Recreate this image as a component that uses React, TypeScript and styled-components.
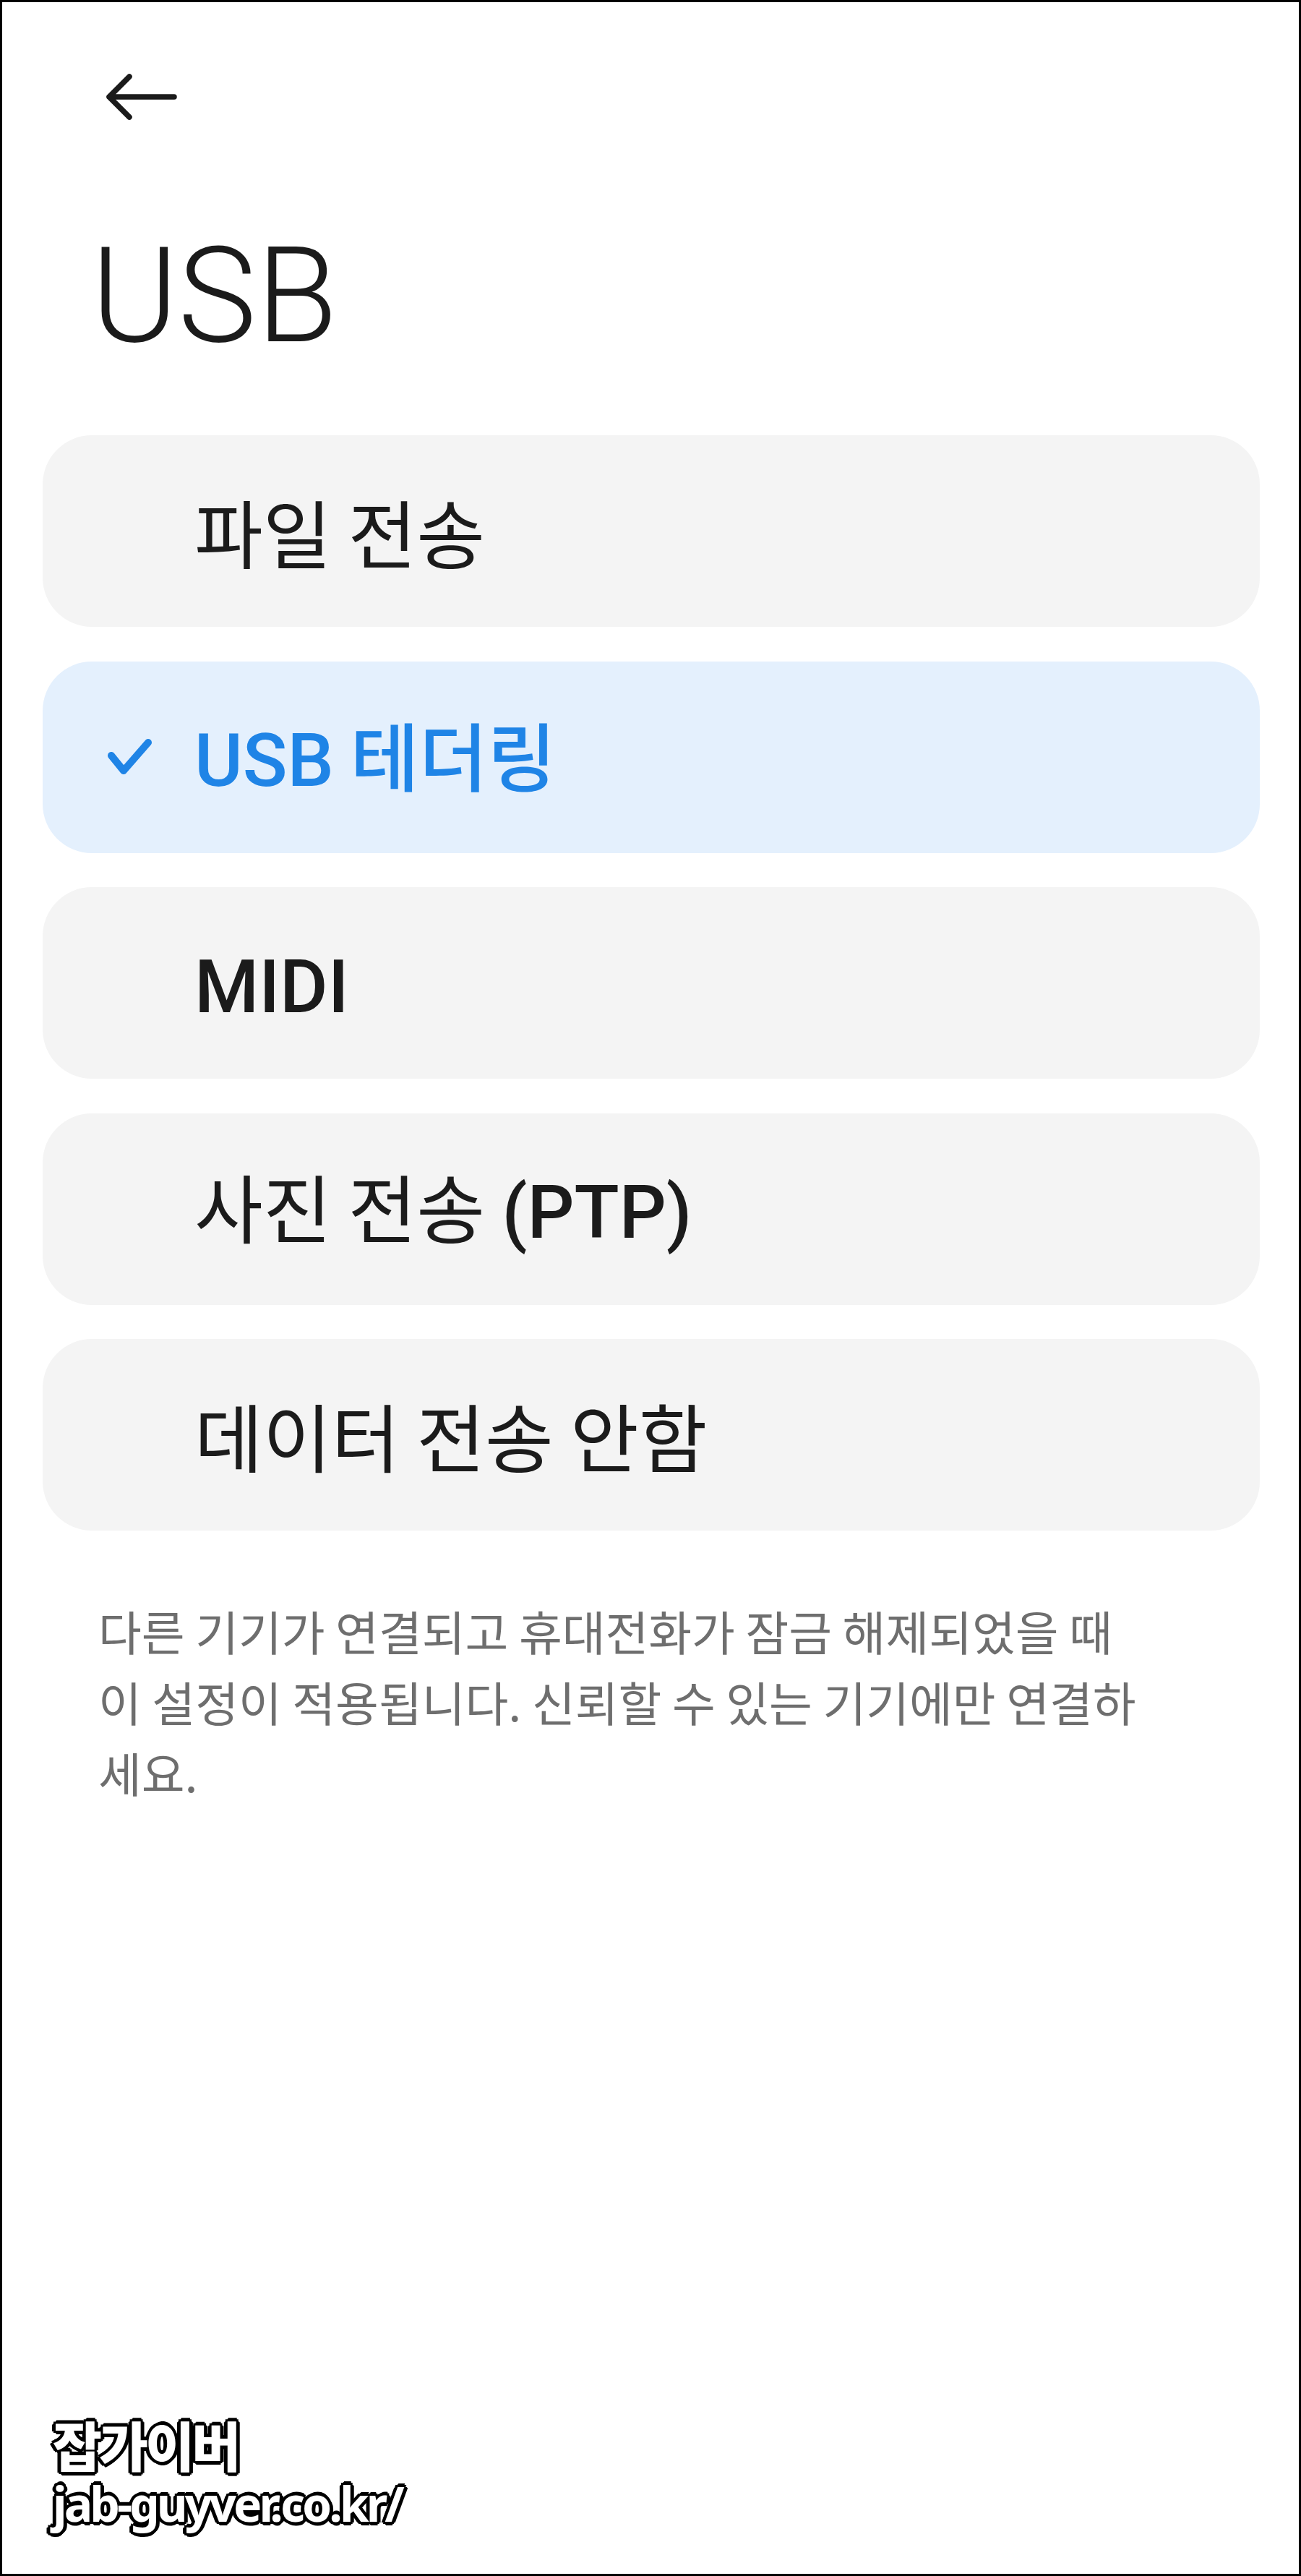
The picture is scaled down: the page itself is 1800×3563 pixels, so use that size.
import React from 'react';
import styled, { createGlobalStyle } from 'styled-components';

const GlobalStyle = createGlobalStyle`
    html, body {
        margin: 0;
        padding: 0;
        background: #ffffff;
    }
    * {
        box-sizing: border-box;
    }
`;

const Screen = styled.div`
    position: relative;
    width: 1800px;
    height: 3563px;
    border: 3px solid #000000;
    background: #ffffff;
    font-family: "Noto Sans CJK KR", "Noto Sans", sans-serif;
    color: #1b1b1b;
    overflow: hidden;
`;

const TopBar = styled.div`
    height: 262px;
    display: flex;
    align-items: center;
    padding-left: 143px;
`;

const BackButton = styled.button`
    border: 0;
    background: none;
    padding: 0;
    display: flex;
    cursor: pointer;
`;

const Title = styled.h1`
    margin: 53px 0 0;
    padding-left: 123px;
    font-family: Roboto, "Noto Sans", sans-serif;
    font-weight: 300;
    font-size: 183px;
    line-height: 183px;
    color: #1b1b1b;
`;

const ModeList = styled.ul`
    list-style: none;
    margin: 101px 54px 0 56px;
    padding: 0;
    display: flex;
    flex-direction: column;
    gap: 47.5px;
`;

const ModeItem = styled.li<{ $selected?: boolean }>`
    height: 265px;
    border-radius: 68px;
    background: ${p => (p.$selected ? '#e4f0fd' : '#f4f4f4')};
    color: ${p => (p.$selected ? '#1f84e6' : '#1b1b1b')};
    display: flex;
    align-items: center;
    padding-left: 87px;
    cursor: pointer;
`;

const CheckSlot = styled.div`
    width: 66px;
    height: 52px;
    margin-right: 57px;
    display: flex;
`;

const Label = styled.span<{ $selected?: boolean }>`
    font-size: 103px;
    font-weight: ${p => (p.$selected ? 500 : 400)};
    line-height: 1;
    white-space: nowrap;
`;

const Latin = styled.span`
    font-family: Roboto, "Noto Sans", sans-serif;
    font-size: 102px;
    font-weight: 500;
`;

const Notice = styled.p`
    margin: 89px 0 0;
    padding-left: 133px;
    font-size: 65px;
    line-height: 98px;
    color: #6e6e6e;
`;

const Watermark = styled.div`
    position: absolute;
    left: 70px;
    bottom: 60px;
    display: flex;
    flex-direction: column;
    gap: 4px;
    color: #ffffff;
    font-weight: 700;
    text-shadow:
        4px 0 0 #000, -4px 0 0 #000, 0 4px 0 #000, 0 -4px 0 #000,
        3px 3px 0 #000, -3px 3px 0 #000, 3px -3px 0 #000, -3px -3px 0 #000,
        5px 1px 0 #000, -5px 1px 0 #000, 1px 5px 0 #000, 1px -5px 0 #000;
`;

const MarkName = styled.span`
    font-size: 74px;
    line-height: 80px;
    font-weight: 900;
    letter-spacing: -4px;
`;

const MarkUrl = styled.span`
    font-family: "Noto Sans", sans-serif;
    font-size: 66px;
    line-height: 76px;
    letter-spacing: -4px;
`;

const modes = [
    { key: 'mtp', ko: '파일 전송' },
    { key: 'tether', latin: 'USB', ko: ' 테더링', selected: true },
    { key: 'midi', latin: 'MIDI' },
    { key: 'ptp', ko: '사진 전송 ', latinAfter: '(PTP)' },
    { key: 'none', ko: '데이터 전송 안함' },
];

function BackArrow() {
    return (
        <svg width="100" height="70" viewBox="0 0 100 70" fill="none">
            <path d="M95 35H5M33 7L5 35L33 63" stroke="#1b1b1b" strokeWidth="7.5" strokeLinecap="round" strokeLinejoin="round" />
        </svg>
    );
}

function CheckMark() {
    return (
        <svg width="66" height="52" viewBox="0 0 66 52" fill="none">
            <path d="M8 24L25 45L59 6" stroke="#1f84e6" strokeWidth="10" strokeLinecap="round" strokeLinejoin="round" />
        </svg>
    );
}

function App() {
    return (
        <>
            <GlobalStyle />
            <Screen>
                <TopBar>
                    <BackButton type="button" aria-label="back">
                        <BackArrow />
                    </BackButton>
                </TopBar>
                <Title>USB</Title>
                <ModeList>
                    {modes.map(m => (
                        <ModeItem key={m.key} $selected={m.selected}>
                            <CheckSlot>{m.selected ? <CheckMark /> : null}</CheckSlot>
                            <Label $selected={m.selected}>
                                {m.latin ? <Latin>{m.latin}</Latin> : null}
                                {m.ko}
                                {m.latinAfter ? <Latin>{m.latinAfter}</Latin> : null}
                            </Label>
                        </ModeItem>
                    ))}
                </ModeList>
                <Notice>
                    다른 기기가 연결되고 휴대전화가 잠금 해제되었을 때<br />
                    이 설정이 적용됩니다. 신뢰할 수 있는 기기에만 연결하<br />
                    세요.
                </Notice>
                <Watermark>
                    <MarkName>잡가이버</MarkName>
                    <MarkUrl>jab-guyver.co.kr/</MarkUrl>
                </Watermark>
            </Screen>
        </>
    );
}

export default React.memo(App);
